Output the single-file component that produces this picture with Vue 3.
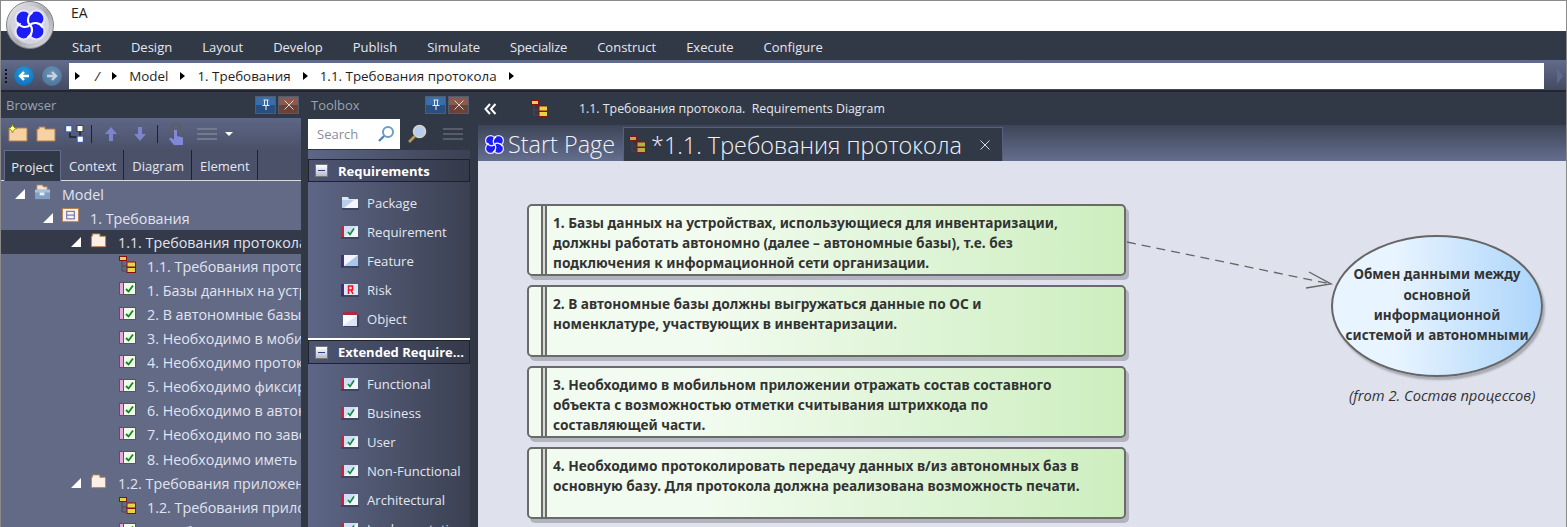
<script setup>
const menus = ["Start", "Design", "Layout", "Develop", "Publish", "Simulate", "Specialize", "Construct", "Execute", "Configure"];
const crumbs = ["/", "Model", "1. Требования", "1.1. Требования протокола"];
const tabs = ["Project", "Context", "Diagram", "Element"];

const tree = [
  { level: 0, icon: "model", text: "Model", open: true },
  { level: 1, icon: "view", text: "1. Требования", open: true },
  { level: 2, icon: "folder", text: "1.1. Требования протокола", open: true, selected: true },
  { level: 3, icon: "diagram", text: "1.1. Требования протокола" },
  { level: 3, icon: "req", text: "1. Базы данных на устройствах" },
  { level: 3, icon: "req", text: "2. В автономные базы должны" },
  { level: 3, icon: "req", text: "3. Необходимо в мобильном" },
  { level: 3, icon: "req", text: "4. Необходимо протоколировать" },
  { level: 3, icon: "req", text: "5. Необходимо фиксировать" },
  { level: 3, icon: "req", text: "6. Необходимо в автономной" },
  { level: 3, icon: "req", text: "7. Необходимо по завершении" },
  { level: 3, icon: "req", text: "8. Необходимо иметь" },
  { level: 2, icon: "folder", text: "1.2. Требования приложения", open: true },
  { level: 3, icon: "diagram", text: "1.2. Требования приложения" },
  { level: 3, icon: "req", text: "1. Мобильное приложение" }
];

const toolGroups = [
  {
    title: "Requirements",
    items: [
      { icon: "tool-package", text: "Package" },
      { icon: "tool-req", text: "Requirement" },
      { icon: "tool-feature", text: "Feature" },
      { icon: "tool-risk", text: "Risk" },
      { icon: "tool-object", text: "Object" }
    ]
  },
  {
    title: "Extended Require...",
    items: [
      { icon: "tool-req", text: "Functional" },
      { icon: "tool-req", text: "Business" },
      { icon: "tool-req", text: "User" },
      { icon: "tool-req", text: "Non-Functional" },
      { icon: "tool-req", text: "Architectural" },
      { icon: "tool-req", text: "Implementation" }
    ]
  }
];

const cards = [
  ["1. Базы данных на устройствах, использующиеся для инвентаризации,", "должны работать автономно (далее – автономные базы), т.е. без", "подключения к информационной сети организации."],
  ["2. В автономные базы должны выгружаться данные по ОС и", "номенклатуре, участвующих в инвентаризации."],
  ["3. Необходимо в мобильном приложении отражать состав составного", "объекта с возможностью отметки считывания штрихкода по", "составляющей части."],
  ["4. Необходимо протоколировать передачу данных в/из автономных баз в", "основную базу. Для протокола должна реализована возможность печати."]
];

const ellipseLines = ["Обмен данными между", "основной", "информационной", "системой и автономными"];
</script>

<template>
  <div class="app">
    <svg class="sprite" width="0" height="0">
      <defs>
        <symbol id="model" viewBox="0 0 18 18">
          <path d="M3 1h6l1 2h4v4H3z" fill="#f6e3cf" stroke="#a9825c" />
          <rect x="1" y="6" width="16" height="10" fill="#7f9fc4" />
          <rect x="1" y="6" width="16" height="3" fill="#a8c0dc" />
          <rect x="6" y="9" width="5" height="3" fill="#e8eef6" />
        </symbol>
        <symbol id="view" viewBox="0 0 18 18">
          <rect x="0.5" y="0.5" width="17" height="14" fill="#fdeee6" stroke="#b5814f" />
          <rect x="5" y="3.5" width="8" height="8" fill="#fdeee6" stroke="#4a62b8" />
          <path d="M5 7.5h8" stroke="#4a62b8" />
        </symbol>
        <symbol id="folder" viewBox="0 0 18 18">
          <path d="M1.5 15.5V4.500h1V2h8v2.500h6v11z" fill="#fdeee6" stroke="#b5814f" />
        </symbol>
        <symbol id="diagram" viewBox="0 0 17 17">
          <path d="M3 5v10h6M3 10h6" fill="none" stroke="#4a4a4a" />
          <rect x="0.5" y="0.5" width="7" height="4" fill="#e4d44a" stroke="#8e0f0f" />
          <rect x="8" y="6" width="8.500" height="5" fill="#e4d44a" stroke="#8e0f0f" />
          <rect x="8" y="11.500" width="8.500" height="5" fill="#e4d44a" stroke="#8e0f0f" />
        </symbol>
        <symbol id="req" viewBox="0 0 17 13">
          <rect x="0.5" y="0.5" width="16" height="12" fill="#f0fbe9" stroke="#555" />
          <rect x="1" y="1" width="3" height="11" fill="#e8a8de" />
          <path d="M4.500 0v13" stroke="#555" />
          <path d="M7 7l2.500 2.500 4.500-6" fill="none" stroke="#0a8a1e" stroke-width="1.800" />
        </symbol>
        <symbol id="tool-package" viewBox="0 0 18 14">
          <path d="M1 1h6l1 2h9v9H1z" fill="#dce6f6" />
          <path d="M1 4h16v8H1z" fill="#b9cdea" />
          <path d="M3 12l10-8h4v8z" fill="#f2f6fc" />
          <path d="M1 13h17" stroke="#2a2f48" />
        </symbol>
        <symbol id="tool-req" viewBox="0 0 18 14">
          <rect x="0" y="1" width="3" height="12" fill="#c8243a" />
          <rect x="3" y="1" width="14" height="11" fill="#cfe0f6" />
          <path d="M3 12L17 1v11z" fill="#f2f6fc" />
          <path d="M7 7l2 2.500 4-6" fill="none" stroke="#0a8a3a" stroke-width="1.600" />
          <path d="M0 13h18" stroke="#2a2f48" />
        </symbol>
        <symbol id="tool-feature" viewBox="0 0 18 14">
          <rect x="0" y="1" width="3" height="12" fill="#40307a" />
          <rect x="3" y="1" width="14" height="11" fill="#a9c6ec" />
          <path d="M3 12L17 1H3z" fill="#f2f6fc" />
          <path d="M0 13h18" stroke="#2a2f48" />
        </symbol>
        <symbol id="tool-risk" viewBox="0 0 18 14">
          <rect x="0" y="1" width="3" height="12" fill="#40307a" />
          <rect x="3" y="1" width="14" height="11" fill="#dbe6f6" />
          <path d="M7.500 11V3h4v4h-4M10 7l2 4" fill="none" stroke="#f01020" stroke-width="1.500" />
          <path d="M0 13h18" stroke="#2a2f48" />
        </symbol>
        <symbol id="tool-object" viewBox="0 0 16 16">
          <rect x="1" y="1" width="14" height="14" fill="#dbe6f6" />
          <rect x="1" y="1" width="14" height="3" fill="#b02a3e" />
          <path d="M1 15L15 4H1z" fill="#fbfcff" />
          <path d="M2 16h14V4" fill="none" stroke="#2a2f48" />
        </symbol>
        <symbol id="swirl" viewBox="-20 -20 40 40">
          <g fill="#1c1cf4" stroke="#e4e4ff" stroke-width="2.400">
            <circle cx="-7.500" cy="-7.500" r="9.500" />
            <circle cx="7.500" cy="-7.500" r="9.500" />
            <circle cx="7.500" cy="7.500" r="9.500" />
            <circle cx="-7.500" cy="7.500" r="9.500" />
          </g>
          <circle r="11" fill="#1c1cf4" />
          <g fill="none" stroke="#fff" stroke-width="2.400">
            <path d="M0 0C-4-4-3-11 3-15" />
            <path d="M0 0C4-4 11-3 15 3" />
            <path d="M0 0C4 4 3 11-3 15" />
            <path d="M0 0C-4 4-11 3-15-3" />
          </g>
        </symbol>
        <linearGradient id="silver" x1="0" y1="0" x2="1" y2="1">
          <stop offset="0" stop-color="#f4f4f6" />
          <stop offset="0.55" stop-color="#a6a8ae" />
          <stop offset="1" stop-color="#e6e6ea" />
        </linearGradient>
      </defs>
    </svg>

    <svg class="logo" viewBox="0 0 48 48" width="48" height="48">
      <circle cx="24" cy="24" r="23.500" fill="url(#silver)" stroke="#80828a" />
      <circle cx="24" cy="24" r="19" fill="#d4d5dc" />
      <use href="#swirl" x="7" y="7" width="34" height="34" />
    </svg>

    <header class="title-bar">EA</header>
    <nav class="menu-bar">
      <span v-for="item in menus" :key="item">{{ item }}</span>
    </nav>

    <div class="path-bar">
      <span class="grip"></span>
      <span class="round-btn">
        <svg viewBox="0 0 14 14" width="14" height="14"><path d="M12 7H3M7 3L3 7l4 4" fill="none" stroke="#fff" stroke-width="2.400" /></svg>
      </span>
      <span class="round-btn round-btn--off">
        <svg viewBox="0 0 14 14" width="14" height="14"><path d="M2 7h9M7 3l4 4-4 4" fill="none" stroke="#c4d2e2" stroke-width="2.400" /></svg>
      </span>
      <div class="path-input">
        <span class="path-arrow"></span>
        <template v-for="crumb in crumbs" :key="crumb">
          <span class="crumb" :class="{ 'crumb--slash': crumb === '/' }">{{ crumb }}</span>
          <span class="path-arrow"></span>
        </template>
      </div>
      <span class="path-more"></span>
    </div>

    <div class="workspace">
      <aside class="browser">
        <div class="pane-head">
          <span>Browser</span>
          <span class="pane-btns">
            <span class="pane-btn pane-btn--pin">
              <svg viewBox="0 0 12 12" width="12" height="12"><path d="M3.500 1h5M4.500 1v5M7.500 1v5M2.500 6.500h7M6 6.500V11" fill="none" stroke="#e4ecf6" /></svg>
            </span>
            <span class="pane-btn pane-btn--close">
              <svg viewBox="0 0 12 12" width="12" height="12"><path d="M1.500 1.500l9 9M10.500 1.500l-9 9" stroke="#dcd4d0" /></svg>
            </span>
          </span>
        </div>

        <div class="browser-tools">
          <svg class="tool" viewBox="0 0 20 20" width="20" height="20">
            <path d="M1 17V4h18v13z" fill="#f6d2a2" stroke="#b0804e" />
            <path d="M4.500 0l1.300 3.200L9 4.500 5.800 5.800 4.500 9 3.200 5.800 0 4.500l3.200-1.300z" fill="#f6f000" stroke="#5f5f18" stroke-width="0.500" />
            <circle cx="4.500" cy="4.500" r="1.800" fill="#fff" />
          </svg>
          <svg class="tool tool--folder" viewBox="0 0 20 20" width="20" height="20">
            <path d="M1 17V5h2V3h6v2h10v12z" fill="#f6d2a2" stroke="#b0804e" />
          </svg>
          <svg class="tool tool--tree" viewBox="0 0 20 20" width="20" height="20">
            <path d="M5 7v6h10M15 7v6" fill="none" stroke="#222" stroke-width="1.500" />
            <rect x="0.500" y="1.500" width="6.500" height="6.500" fill="#fff" stroke="#3c5aa8" stroke-width="1.400" />
            <rect x="12" y="1.500" width="6" height="6" fill="#fff" stroke="#444" />
            <rect x="12" y="12" width="6.500" height="6.500" fill="#fff" stroke="#3c5aa8" stroke-width="1.400" />
          </svg>
          <span class="tool-sep tool-sep--a"></span>
          <svg class="tool tool--up" viewBox="0 0 16 18" width="16" height="18"><path d="M8 2l6 7h-4v7H6V9H2z" fill="#7d84cc" /></svg>
          <svg class="tool tool--down" viewBox="0 0 16 18" width="16" height="18"><path d="M8 16l6-7h-4V2H6v7H2z" fill="#7d84cc" /></svg>
          <span class="tool-sep tool-sep--b"></span>
          <svg class="tool tool--hand" viewBox="0 0 18 24" width="18" height="24">
            <path d="M4 11V5a4 4 0 0 1 8 0v6" fill="none" stroke="#5c5f68" stroke-width="2.600" />
            <path d="M6 8h3v6l6 1.500V23H6l-5-6 1.500-1.500L6 17.500z" fill="#8387d8" />
          </svg>
          <span class="lines lines--tools"></span>
          <span class="drop"></span>
        </div>

        <div class="tabs">
          <span v-for="(tab, index) in tabs" :key="tab" class="tab" :class="{ 'tab--active': index === 0 }">{{ tab }}</span>
        </div>

        <div class="tree">
          <div v-for="(row, index) in tree" :key="index" class="tree-row" :class="[`tree-row--l${row.level}`, { 'tree-row--selected': row.selected }]">
            <span class="twist" :class="{ 'twist--open': row.open }"></span>
            <svg class="tree-icon" :class="`tree-icon--${row.icon}`"><use :href="`#${row.icon}`" /></svg>
            <span class="tree-text">{{ row.text }}</span>
          </div>
        </div>
      </aside>

      <aside class="toolbox">
        <div class="pane-head pane-head--toolbox">
          <span>Toolbox</span>
          <span class="pane-btns">
            <span class="pane-btn pane-btn--pin">
              <svg viewBox="0 0 12 12" width="12" height="12"><path d="M3.500 1h5M4.500 1v5M7.500 1v5M2.500 6.500h7M6 6.500V11" fill="none" stroke="#e4ecf6" /></svg>
            </span>
            <span class="pane-btn pane-btn--close">
              <svg viewBox="0 0 12 12" width="12" height="12"><path d="M1.500 1.500l9 9M10.500 1.500l-9 9" stroke="#dcd4d0" /></svg>
            </span>
          </span>
        </div>

        <div class="search-row">
          <div class="search-box">
            <span>Search</span>
            <svg viewBox="0 0 18 18" width="18" height="18">
              <circle cx="11" cy="7" r="5" fill="#fff" stroke="#6d9cc8" stroke-width="2" />
              <path d="M7 11l-5 5" stroke="#4f86bc" stroke-width="2.400" />
            </svg>
          </div>
          <svg class="search-lens" viewBox="0 0 20 20" width="20" height="20">
            <circle cx="12.500" cy="7.500" r="6" fill="#b7cdf0" stroke="#d8d4c8" stroke-width="1.600" />
            <path d="M8 12l-6 6" stroke="#b69a5e" stroke-width="2.600" />
          </svg>
          <span class="lines lines--dim"></span>
        </div>

        <div class="tool-list">
          <section v-for="(group, index) in toolGroups" :key="group.title" class="tool-group" :class="{ 'tool-group--next': index > 0 }">
            <div class="group-head">
              <span class="minus"></span>
              <strong>{{ group.title }}</strong>
            </div>
            <div v-for="item in group.items" :key="item.text" class="tool-item">
              <svg class="tool-item__icon" viewBox="0 0 18 16"><use :href="`#${item.icon}`" /></svg>
              <span>{{ item.text }}</span>
            </div>
          </section>
        </div>
      </aside>

      <main class="main">
        <div class="doc-head">
          <svg viewBox="0 0 13 12" width="13" height="12"><path d="M6 1L1.500 6 6 11M11.500 1L7 6l4.500 5" fill="none" stroke="#fff" stroke-width="2" /></svg>
          <svg class="doc-head__icon" width="17" height="17"><use href="#diagram" /></svg>
          <span>1.1. Требования протокола.&nbsp; Requirements Diagram</span>
        </div>

        <div class="doc-tabs">
          <div class="doc-tab">
            <svg width="21" height="21"><use href="#swirl" /></svg>
            <span>Start Page</span>
          </div>
          <div class="doc-tab doc-tab--active">
            <svg width="17" height="17" class="doc-tab__diagram"><use href="#diagram" /></svg>
            <span>*1.1. Требования протокола</span>
            <svg class="doc-tab__x" viewBox="0 0 10 10" width="10" height="10"><path d="M0.500 0.500l9 9M9.500 0.500l-9 9" stroke="#d6dae4" /></svg>
          </div>
        </div>

        <div class="canvas">
          <div class="cards">
            <article v-for="(card, index) in cards" :key="index" class="card">
              <span class="card__strip"></span>
              <p>
                <span v-for="line in card" :key="line" class="card__line">{{ line }}</span>
              </p>
            </article>
          </div>

          <svg class="connector" width="220" height="60" viewBox="0 0 220 60">
            <path d="M2 1L206 43" fill="none" stroke="#666" stroke-width="1.300" stroke-dasharray="9 6" />
            <path d="M184 31L206 43 181 47" fill="none" stroke="#666" stroke-width="1.400" />
          </svg>

          <div class="usecase">
            <span v-for="line in ellipseLines" :key="line">{{ line }}</span>
          </div>
          <div class="usecase-note">(from 2. Состав процессов)</div>
        </div>
      </main>
    </div>
  </div>
</template>

<style>
html,
body {
  margin: 0;
  padding: 0;
  background: #323946;
  overflow: hidden;
}
</style>

<style scoped>
.app {
  position: relative;
  width: 1567px;
  height: 527px;
  box-sizing: border-box;
  display: flex;
  flex-direction: column;
  overflow: hidden;
  border: 1px solid #8a8a8a;
  border-bottom: 0;
  background: #323946;
  font-family: "Open Sans", "Noto Sans", sans-serif;
  color: #e4e7f0;
}

.sprite {
  position: absolute;
}

.logo {
  position: absolute;
  left: 5px;
  top: 0;
  z-index: 3;
}

.title-bar {
  height: 30px;
  flex: none;
  box-sizing: border-box;
  padding: 3px 0 0 70px;
  background: #fff;
  color: #222;
  font-size: 14px;
  line-height: 18px;
}

.menu-bar {
  height: 29px;
  flex: none;
  display: flex;
  gap: 30px;
  align-items: center;
  padding: 2px 0 0 71px;
  box-sizing: border-box;
  background: #323946;
  font-size: 13px;
  color: #e4e7f0;
}

.menu-bar span:nth-child(7) {
  letter-spacing: -0.200px;
}

.path-bar {
  height: 31px;
  flex: none;
  display: flex;
  align-items: center;
  box-sizing: border-box;
  padding: 3px 3px 1px 4px;
  border-bottom: 1px solid #23262f;
  background: linear-gradient(#626c8c, #434a60);
}

.grip {
  width: 2px;
  height: 15px;
  margin-right: 7px;
  flex: none;
  background: repeating-linear-gradient(#10131c 0 2px, transparent 2px 4px);
}

.round-btn {
  width: 20px;
  height: 20px;
  flex: none;
  margin-right: 8px;
  display: flex;
  align-items: center;
  justify-content: center;
  border-radius: 50%;
  background: radial-gradient(circle at 50% 35%, #2a9ce0, #0b63ae);
}

.round-btn--off {
  margin-right: 7px;
  background: radial-gradient(circle at 50% 35%, #6d93b8, #476c94);
}

.path-input {
  flex: 1;
  height: 26px;
  display: flex;
  align-items: center;
  padding-left: 6px;
  background: #fff;
  color: #1e1e1e;
  font-size: 13.400px;
}

.path-more {
  width: 0;
  height: 0;
  margin-left: 13px;
  border-left: 6px solid #5f6888;
  border-top: 8px solid transparent;
  border-bottom: 8px solid transparent;
}

.path-arrow {
  width: 0;
  height: 0;
  flex: none;
  border-left: 5px solid #000;
  border-top: 4.500px solid transparent;
  border-bottom: 4.500px solid transparent;
}

.crumb {
  margin: 0 12px;
}

.crumb--slash {
  font-style: italic;
  margin: 0 12.500px 0 15px;
}

.workspace {
  flex: 1;
  min-height: 0;
  display: flex;
  border-top: 1px solid #23262f;
}

.browser {
  width: 300px;
  flex: none;
  display: flex;
  flex-direction: column;
  background: #323946;
}

.pane-head {
  height: 26px;
  flex: none;
  display: flex;
  align-items: center;
  justify-content: space-between;
  box-sizing: border-box;
  padding: 0 2px 0 5px;
  font-size: 13px;
  color: #9aa2b4;
}

.pane-head--toolbox {
  padding: 0 1px 0 3px;
}

.pane-btns {
  display: flex;
  gap: 2px;
}

.pane-btn {
  width: 21px;
  height: 18px;
  display: flex;
  align-items: center;
  justify-content: center;
  border: 1px solid #525c70;
  box-sizing: border-box;
}

.pane-btn--pin {
  background: linear-gradient(#3a6ea8 50%, #27507e 50%);
}

.pane-btn--close {
  background: linear-gradient(#8a5a50 50%, #6c4238 50%);
}

.browser-tools {
  height: 32px;
  flex: none;
  display: flex;
  align-items: center;
  padding-left: 7px;
  background: linear-gradient(#5d6686, #4a5169);
}

.tool {
  flex: none;
  overflow: visible;
}

.tool--folder {
  margin-left: 8px;
}

.tool--tree {
  margin-left: 9px;
}

.tool--up {
  margin-left: 11px;
}

.tool--down {
  margin-left: 13px;
}

.tool--hand {
  margin-left: 10px;
}

.tool-sep {
  width: 1px;
  height: 18px;
  flex: none;
  background: #1f222c;
}

.tool-sep--a {
  margin-left: 6px;
}

.tool-sep--b {
  margin-left: 9px;
}

.lines {
  width: 20px;
  height: 12px;
  flex: none;
  background: repeating-linear-gradient(#727a8e 0 2px, transparent 2px 5px);
}

.lines--tools {
  margin-left: 11px;
}

.lines--dim {
  margin-left: 16px;
  background: repeating-linear-gradient(#565c6a 0 2px, transparent 2px 5px);
}

.drop {
  margin-left: 8px;
  width: 0;
  height: 0;
  border-top: 4px solid #fff;
  border-left: 4px solid transparent;
  border-right: 4px solid transparent;
}

.tabs {
  height: 31px;
  flex: none;
  display: flex;
  box-sizing: border-box;
  padding-left: 3px;
  background: #4a5169;
  border-bottom: 1px solid #d8dbe4;
  font-size: 13px;
}

.tab {
  display: flex;
  align-items: center;
  padding: 2px 7px 0 8px;
  border-right: 1px solid #1f222c;
  color: #e4e7f0;
}

.tab--active {
  width: 57px;
  justify-content: center;
  padding: 2px 0 0;
  background: #323946;
  border: 1px solid #626c8c;
  border-bottom: 0;
  height: 31px;
  box-sizing: border-box;
}

.tree {
  flex: 1;
  min-height: 0;
  overflow: hidden;
  background: #626a85;
  padding-top: 1px;
  font-size: 14.300px;
}

.tree-row {
  height: 24.100px;
  display: flex;
  align-items: center;
  white-space: nowrap;
  overflow: hidden;
  color: #e0e4f0;
}

.tree-row--selected {
  background: #343a4a;
}

.tree-row--l0 { padding-left: 14px; }
.tree-row--l1 { padding-left: 42px; }
.tree-row--l2 { padding-left: 70px; }
.tree-row--l3 { padding-left: 118px; }

.twist {
  display: none;
}

.twist--open {
  display: block;
  width: 0;
  height: 0;
  margin-right: 9px;
  border-bottom: 10px solid #fff;
  border-left: 10px solid transparent;
}

.tree-icon {
  width: 17px;
  height: 17px;
  flex: none;
  margin: 0 11px 3px 0;
}

.tree-icon--req {
  height: 13px;
}

.tree-text {
  flex: none;
}

.toolbox {
  width: 162px;
  flex: none;
  margin-left: 7px;
  display: flex;
  flex-direction: column;
  overflow: hidden;
}

.search-row {
  height: 32px;
  flex: none;
  display: flex;
  align-items: center;
}

.search-box {
  width: 93px;
  height: 30px;
  margin-left: -1px;
  flex: none;
  box-sizing: border-box;
  padding: 0 5px 0 10px;
  display: flex;
  align-items: center;
  justify-content: space-between;
  background: #fff;
  color: #8a8e98;
  font-size: 13px;
}

.search-lens {
  margin-left: 7px;
  flex: none;
}

.tool-list {
  flex: 1;
  min-height: 0;
  overflow: hidden;
  padding-top: 9px;
  background: linear-gradient(90deg, #5d6686, #3b4152);
}

.tool-group--next {
  margin-top: 5px;
  border-top: 2px solid #fff;
}

.group-head {
  height: 23px;
  margin-bottom: 6px;
  display: flex;
  align-items: center;
  box-sizing: border-box;
  padding-left: 6px;
  background: linear-gradient(90deg, #4d5572, #343a4a);
  border: 1px solid #1f222c;
  font-size: 13px;
  color: #fff;
  white-space: nowrap;
}

.tool-group--next .group-head {
  height: 24px;
  margin-bottom: 5px;
}

.group-head strong {
  margin-left: 10px;
}

.minus {
  position: relative;
  width: 11px;
  height: 11px;
  flex: none;
  background: linear-gradient(#fff, #b9bcc6);
  border: 1px solid #777;
}

.minus::after {
  content: "";
  position: absolute;
  left: 2px;
  right: 2px;
  top: 5px;
  height: 1px;
  background: #2c3f8a;
}

.tool-item {
  height: 29px;
  display: flex;
  align-items: center;
  padding-left: 33px;
  font-size: 13.100px;
  color: #e4e7f0;
  white-space: nowrap;
}

.tool-item__icon {
  width: 18px;
  height: 16px;
  flex: none;
  margin-right: 8px;
}

.main {
  flex: 1;
  min-width: 0;
  margin-left: 8px;
  display: flex;
  flex-direction: column;
}

.doc-head {
  height: 33px;
  flex: none;
  display: flex;
  align-items: center;
  padding-left: 6px;
  font-size: 12.350px;
  color: #e4e7f0;
}

.doc-head__icon {
  margin: 0 31px 0 34px;
}

.doc-tabs {
  height: 36px;
  flex: none;
  display: flex;
  align-items: flex-end;
  padding-left: 6px;
  gap: 8px;
  background: linear-gradient(#3e4558, #646e8e);
  font-size: 23.400px;
  font-weight: 300;
  color: #f0f2f8;
}

.doc-tab {
  height: 34px;
  display: flex;
  align-items: center;
  gap: 3px;
  white-space: nowrap;
}

.doc-tab--active {
  width: 380px;
  box-sizing: border-box;
  padding-left: 5px;
  background: #323946;
  border: 1px solid #57617d;
  border-bottom: 0;
}

.doc-tab__diagram {
  margin-right: 2px;
  opacity: 0.75;
}

.doc-tab__x {
  margin-left: 15px;
}

.canvas {
  position: relative;
  flex: 1;
  min-height: 0;
  overflow: hidden;
  background: #dfe1ec;
  font-family: "Noto Sans", sans-serif;
}

.cards {
  display: flex;
  flex-direction: column;
  gap: 9px;
  padding: 43px 0 0 49px;
}

.card {
  width: 599px;
  height: 72px;
  box-sizing: border-box;
  flex: none;
  display: flex;
  border: 2px solid #6a6a6a;
  border-radius: 5px;
  background: linear-gradient(90deg, #f1fbef 30%, #cdeebf);
  box-shadow: 3px 4px 0 #b2b4bd;
}

.card__strip {
  width: 12px;
  flex: none;
  border-right: 2px solid #6a6a6a;
  position: relative;
}

.card__strip::after {
  content: "";
  position: absolute;
  left: 14px;
  top: 0;
  bottom: 0;
  width: 2px;
  background: #d6ded3;
  border-right: 2px solid #6a6a6a;
}

.card p {
  margin: 0;
  padding: 7px 0 0 10px;
  font-size: 13.700px;
  font-weight: 700;
  line-height: 20px;
  color: #333;
  white-space: nowrap;
}

.card__line {
  display: block;
}

.connector {
  position: absolute;
  left: 647px;
  top: 80px;
}

.usecase {
  position: absolute;
  left: 853px;
  top: 74px;
  width: 212px;
  height: 142px;
  box-sizing: border-box;
  display: flex;
  flex-direction: column;
  align-items: center;
  justify-content: center;
  padding-bottom: 2px;
  border: 2px solid #666;
  border-radius: 50%;
  background: linear-gradient(90deg, #e8f4ff 30%, #acd5fb);
  box-shadow: 2px 3px 2px #a8aab4;
  font-size: 13.500px;
  font-weight: 700;
  line-height: 20.300px;
  color: #333;
  white-space: nowrap;
}

.usecase-note {
  position: absolute;
  left: 871px;
  top: 224px;
  font-family: "Open Sans", sans-serif;
  font-size: 14.700px;
  font-style: italic;
  color: #333;
  white-space: nowrap;
}
</style>
